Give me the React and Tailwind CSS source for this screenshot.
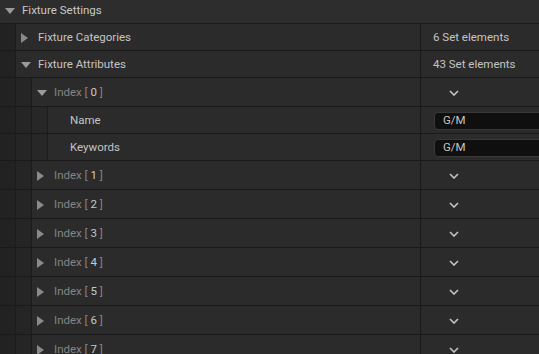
import React from "react";

const stripBg = ["bg-[#222222]", "bg-[#252525]", "bg-[#272727]"];

const TriDown = ({ cls = "text-[#9a9a9a]" }) => (
  <svg width="10" height="6" viewBox="0 0 10 6" className={cls}>
    <path d="M0 0 H10 L5 6 Z" fill="currentColor" />
  </svg>
);

const TriRight = ({ cls = "text-[#8a8a8a]" }) => (
  <svg width="7" height="10" viewBox="0 0 7 10" className={cls}>
    <path d="M0 0 L7 5 L0 10 Z" fill="currentColor" />
  </svg>
);

const Chevron = () => (
  <svg width="10" height="6" viewBox="0 0 10 6" className="text-[#c4c4c4]">
    <path d="M1 1 L5 5 L9 1" fill="none" stroke="currentColor" strokeWidth="1.6" />
  </svg>
);

const Row = ({ depth, h, arrow, label, value }) => (
  <div className={`flex border-b border-[#1a1a1a] ${h}`}>
    {Array.from({ length: depth }).map((_, i) => (
      <div key={i} className={`w-[16px] shrink-0 border-r border-[#1c1c1c] ${stripBg[i]}`} />
    ))}
    <div className="flex-1 flex min-w-0 bg-[#2b2b2b]">
      <div className="flex-1 flex items-center pl-[5px] pt-[2px] min-w-0">
        <div className="w-[17px] flex items-center">
          {arrow === "down" && <TriDown />}
          {arrow === "right" && <TriRight />}
        </div>
        {label}
      </div>
      <div className="w-[119px] shrink-0 border-l border-[#1a1a1a] flex items-center pt-[2px] overflow-hidden">
        {value}
      </div>
    </div>
  </div>
);

const Index = ({ n }) => (
  <span className="text-[11.5px] text-[#858585]">
    Index [ <span className="text-[#c8c8c8]">{n}</span> ]
  </span>
);

const Label = ({ children }) => <span className="text-[11.5px] text-[#c4c4c4]">{children}</span>;

const SetCount = ({ children }) => <span className="pl-[12px] text-[11.5px] text-[#c4c4c4]">{children}</span>;

const Drop = () => (
  <div className="pl-[28px] flex items-center">
    <Chevron />
  </div>
);

const TextBox = () => (
  <div className="ml-[13px] w-[120px] h-[18px] shrink-0 rounded-[4px] bg-[#0f0f0f] border border-[#383838] flex items-center pl-[8px] text-[11.5px] text-[#c4c4c4]">
    G/M
  </div>
);

export default function App() {
  return (
    <div className="w-[539px] h-[354px] overflow-hidden bg-[#1a1a1a] font-['Roboto',sans-serif]">
      <div className="flex items-center h-[24px] pb-[2px] pl-[5px] border-b border-[#1a1a1a] bg-[#2d2d2d]">
        <div className="w-[17px] flex items-center">
          <TriDown />
        </div>
        <span className="text-[11.5px] text-[#c8c8c8]">Fixture Settings</span>
      </div>
      <Row depth={1} h="h-[27px]" arrow="right" label={<Label>Fixture Categories</Label>} value={<SetCount>6 Set elements</SetCount>} />
      <Row depth={1} h="h-[27px]" arrow="down" label={<Label>Fixture Attributes</Label>} value={<SetCount>43 Set elements</SetCount>} />
      <Row depth={2} h="h-[29px]" arrow="down" label={<Index n={0} />} value={<Drop />} />
      <Row depth={3} h="h-[27px]" label={<Label>Name</Label>} value={<TextBox />} />
      <Row depth={3} h="h-[27px]" label={<Label>Keywords</Label>} value={<TextBox />} />
      {[1, 2, 3, 4, 5, 6, 7].map((n) => (
        <Row key={n} depth={2} h="h-[29px]" arrow="right" label={<Index n={n} />} value={<Drop />} />
      ))}
    </div>
  );
}
